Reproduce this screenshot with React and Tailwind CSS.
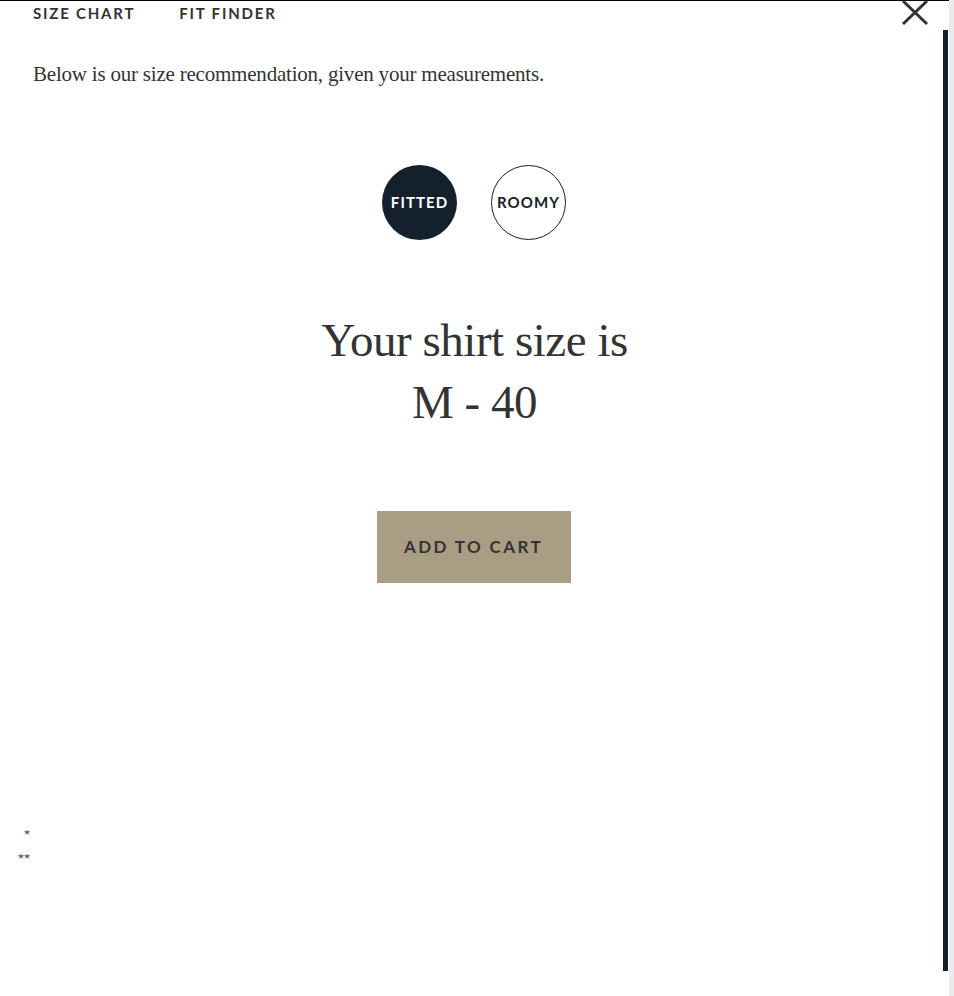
import { useState } from "react";

const serif = { fontFamily: '"Liberation Serif", "Times New Roman", serif' };
const sans = { fontFamily: 'Lato, "Noto Sans", sans-serif' };

const FitButton = ({ label, active, onClick }) => (
  <button
    onClick={onClick}
    style={sans}
    className={
      "h-[75px] w-[75px] rounded-full flex items-center justify-center text-[15px] font-bold tracking-[0.07em] " +
      (active ? "bg-[#14202b] text-white" : "bg-white text-[#14202b] border border-[#14202b]")
    }
  >
    {label}
  </button>
);

export default function App() {
  const [fit, setFit] = useState("fitted");

  return (
    <div className="flex h-[996px] w-full overflow-hidden bg-white">
      {/* Modal content */}
      <div className="relative flex-1 border-t border-black">
        <button className="absolute right-[20px] top-[-1px] text-[#333]" aria-label="Close">
          <svg width="28" height="26" viewBox="0 0 28 26">
            <path d="M2 1 L26 24 M26 1 L2 24" stroke="#333" strokeWidth="3" fill="none" />
          </svg>
        </button>

        {/* Scroll thumb */}
        <div className="absolute right-[1px] top-[29px] h-[941px] w-[5px] bg-[#14202b]"></div>

        <div className="flex flex-col">
          {/* Tabs */}
          <div style={sans} className="mt-[2px] flex gap-[44px] pl-[33px] text-[15px] leading-[20px] font-bold tracking-[0.12em] text-[#333]">
            <span>SIZE CHART</span>
            <span>FIT FINDER</span>
          </div>

          <p style={serif} className="mt-[37px] pl-[33px] text-[21px] leading-[28px] tracking-[-0.01em] text-[#333]">
            Below is our size recommendation, given your measurements.
          </p>

          {/* Fit options */}
          <div className="mt-[77px] flex justify-center gap-[34px] pr-[1px]">
            <FitButton label="FITTED" active={fit === "fitted"} onClick={() => setFit("fitted")} />
            <FitButton label="ROOMY" active={fit === "roomy"} onClick={() => setFit("roomy")} />
          </div>

          {/* Result */}
          <h2 style={serif} className="mt-[69px] text-center text-[47px] leading-[62px] tracking-[-0.01em] text-[#333]">
            Your shirt size is
            <br />
            M - 40
          </h2>

          <div className="mt-[78px] flex justify-center pr-[2px]">
            <button
              style={sans}
              className="h-[72px] w-[194px] bg-[#a99e84] text-[17px] font-bold tracking-[0.14em] text-[#333]"
            >
              ADD TO CART
            </button>
          </div>

          {/* Footnotes */}
          <div style={serif} className="mt-[239px] text-[12px] leading-[24px] text-[#333]">
            <div className="pl-[24px]">*</div>
            <div className="pl-[18px]">**</div>
          </div>
        </div>
      </div>

      {/* Scrollbar track */}
      <div className="w-[5px] bg-[#ebebeb]"></div>
    </div>
  );
}
